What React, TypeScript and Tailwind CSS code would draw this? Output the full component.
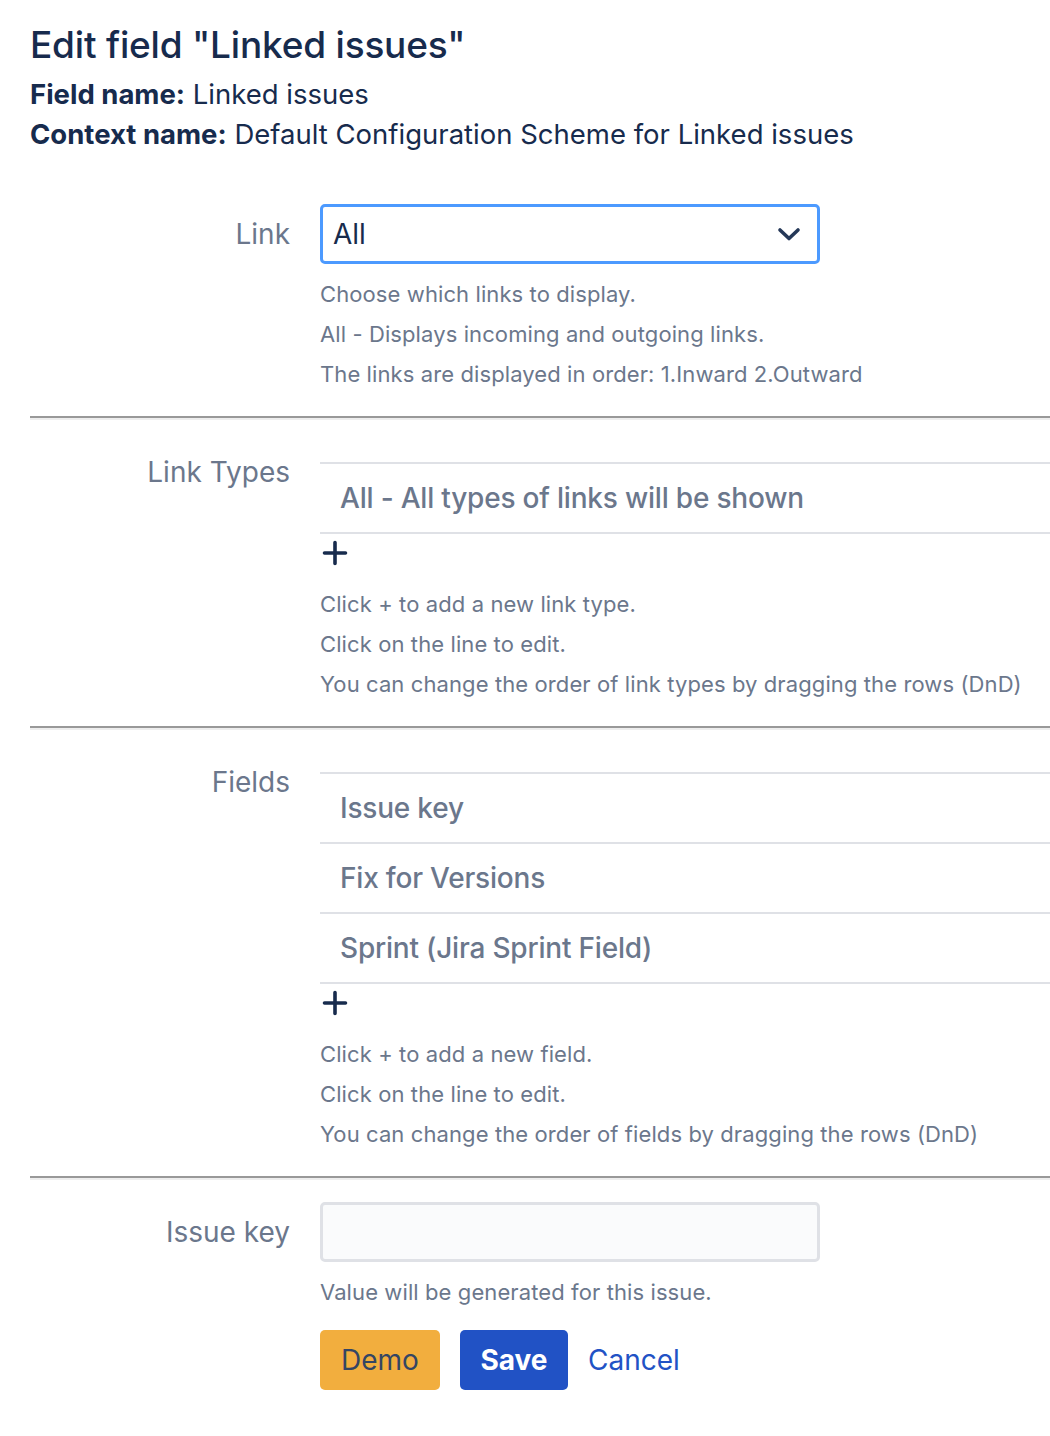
import React from "react";

const Plus = () => (
  <svg width="28" height="28" viewBox="0 0 28 28" className="block">
    <path d="M14 3.5v21M3.5 14h21" stroke="#172b4d" strokeWidth="3.6" strokeLinecap="round" />
  </svg>
);

const Chevron = () => (
  <svg width="28" height="28" viewBox="0 0 28 28" className="block">
    <path d="M5 10l9 8.5 9-8.5" fill="none" stroke="#253858" strokeWidth="3.6" strokeLinecap="round" strokeLinejoin="round" />
  </svg>
);

const Divider = () => (
  <div className="ml-[30px] border-t-2 border-b-2 border-t-[#999999] border-b-[#eeeeee]" />
);

const Help = ({ lines }: { lines: string[] }) => (
  <div className="mt-[10px] text-[22px] leading-[40px] text-[#6b778c] tracking-[0.1px]">
    {lines.map((l) => (
      <div key={l}>{l}</div>
    ))}
  </div>
);

const Label = ({ children }: { children: React.ReactNode }) => (
  <div className="w-[290px] shrink-0 text-right text-[28px] leading-[40px] text-[#6b778c] mt-[10px]">{children}</div>
);

const TableRows = ({ rows }: { rows: string[] }) => (
  <div className="mt-[20px]">
    {rows.map((r) => (
      <div key={r} className="h-[70px] border-t-2 border-[#dfe1e6] pl-[20px] flex items-center text-[28px] font-medium text-[#6b778c] tracking-[-0.2px]">
        {r}
      </div>
    ))}
    <div className="border-t-2 border-[#dfe1e6] h-[42px] pt-[5px] pl-[1px]">
      <Plus />
    </div>
  </div>
);

export default function App() {
  return (
    <div className="w-[1050px] min-h-[1436px] bg-white text-[#172b4d]" style={{ fontFamily: "Inter, 'Noto Sans', sans-serif" }}>
      <div className="pl-[30px] pt-[22px]">
        <h1 className="text-[37px] leading-[46px] font-medium tracking-[-0.2px]">Edit field "Linked issues"</h1>
        <div className="mt-[6px] text-[27.5px] leading-[40px]">
          <div><span className="font-bold">Field name:</span> Linked issues</div>
          <div><span className="font-bold">Context name:</span> Default Configuration Scheme for Linked issues</div>
        </div>
      </div>

      {/* Link */}
      <div className="flex pt-[50px] pb-[22px]">
        <Label>Link</Label>
        <div className="ml-[30px] flex-1">
          <div className="w-[500px] h-[60px] border-[3px] border-[#4c9aff] rounded-[5px] flex items-center justify-between pl-[10px] pr-[14px] text-[28px] text-[#172b4d]">
            <span>All</span>
            <Chevron />
          </div>
          <Help lines={["Choose which links to display.", "All - Displays incoming and outgoing links.", "The links are displayed in order: 1.Inward 2.Outward"]} />
        </div>
      </div>
      <Divider />

      {/* Link Types */}
      <div className="flex py-[22px]">
        <Label>Link Types</Label>
        <div className="ml-[30px] flex-1">
          <TableRows rows={["All - All types of links will be shown"]} />
          <Help lines={["Click + to add a new link type.", "Click on the line to edit.", "You can change the order of link types by dragging the rows (DnD)"]} />
        </div>
      </div>
      <Divider />

      {/* Fields */}
      <div className="flex py-[22px]">
        <Label>Fields</Label>
        <div className="ml-[30px] flex-1">
          <TableRows rows={["Issue key", "Fix for Versions", "Sprint (Jira Sprint Field)"]} />
          <Help lines={["Click + to add a new field.", "Click on the line to edit.", "You can change the order of fields by dragging the rows (DnD)"]} />
        </div>
      </div>
      <Divider />

      {/* Issue key */}
      <div className="flex pt-[22px] pb-[46px]">
        <Label>Issue key</Label>
        <div className="ml-[30px] flex-1">
          <div className="w-[500px] h-[60px] border-[3px] border-[#dfe1e6] bg-[#fafbfc] rounded-[5px]" />
          <Help lines={["Value will be generated for this issue."]} />
          <div className="mt-[18px] flex items-center gap-[20px] text-[28px]">
            <button className="h-[60px] w-[120px] rounded-[5px] bg-[#f2ae3e] text-[#344563]">Demo</button>
            <button className="h-[60px] w-[108px] rounded-[5px] bg-[#2152c5] text-white font-bold">Save</button>
            <span className="text-[#2152c5]">Cancel</span>
          </div>
        </div>
      </div>
    </div>
  );
}
